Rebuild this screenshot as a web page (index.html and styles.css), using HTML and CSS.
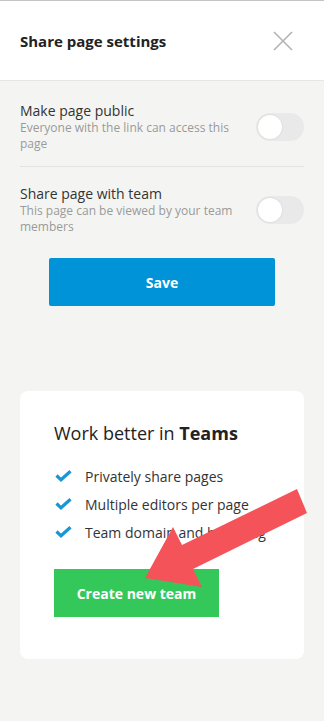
FILE: index.html
```html
<!DOCTYPE html>
<html>
<head>
<meta charset="utf-8">
<link rel="stylesheet" href="styles.css">
</head>
<body>
<div class="page">
  <header class="header">
    <h1 class="title">Share page settings</h1>
    <svg class="close" width="20" height="20" viewBox="0 0 20 20"><path d="M1 1 L19 19 M19 1 L1 19" stroke="#b3b3b3" stroke-width="1.6" fill="none"/></svg>
  </header>
  <section class="settings">
    <div class="row row-first">
      <div class="row-text">
        <div class="row-title">Make page public</div>
        <div class="row-sub">Everyone with the link can access this page</div>
      </div>
      <div class="toggle"><span class="knob"></span></div>
    </div>
    <div class="row row-second">
      <div class="row-text">
        <div class="row-title">Share page with team</div>
        <div class="row-sub">This page can be viewed by your team members</div>
      </div>
      <div class="toggle"><span class="knob"></span></div>
    </div>
    <button class="save">Save</button>
  </section>
  <section class="card">
    <h2 class="card-title">Work better in <b>Teams</b></h2>
    <ul class="features">
      <li><svg class="check" width="17" height="12" viewBox="0 0 17 12"><path d="M1.5 5.5 L6 9.8 L15.5 1.2" stroke="#1a96d6" stroke-width="3.2" fill="none"/></svg>Privately share pages</li>
      <li><svg class="check" width="17" height="12" viewBox="0 0 17 12"><path d="M1.5 5.5 L6 9.8 L15.5 1.2" stroke="#1a96d6" stroke-width="3.2" fill="none"/></svg>Multiple editors per page</li>
      <li><svg class="check" width="17" height="12" viewBox="0 0 17 12"><path d="M1.5 5.5 L6 9.8 L15.5 1.2" stroke="#1a96d6" stroke-width="3.2" fill="none"/></svg>Team domain and branding</li>
    </ul>
    <button class="create">Create new team</button>
  </section>
  <svg class="arrow" width="324" height="721" viewBox="0 0 324 721"><polygon points="297,489 307,513 193,569 202,587 145,578 173,527 182,545" fill="#f4535a"/></svg>
</div>
</body>
</html>
```
FILE: styles.css
```css
* { box-sizing: border-box; }
html, body { margin: 0; padding: 0; }
body {
  background: #f4f5f2;
  font-family: "Open Sans", "Liberation Sans", sans-serif;
  color: #333;
}
.page {
  position: relative;
  width: 324px;
  min-height: 721px;
}
.header {
  height: 81px;
  background: #fff;
  border-top: 1px solid #c4c4c4;
  border-bottom: 1px solid #e6e7e4;
  display: flex;
  align-items: center;
  justify-content: space-between;
  padding: 0 31px 0 20px;
}
.title {
  margin: 0;
  font-size: 15px;
  font-weight: 700;
  color: #222;
  line-height: 20px;
}
.close { display: block; margin-top: 1px; }
.settings {
  padding: 21px 20px 0;
}
.row {
  display: flex;
  align-items: center;
  justify-content: space-between;
}
.row-first {
  padding-bottom: 14px;
  border-bottom: 1px solid #e3e4e1;
}
.row-second {
  padding-top: 18px;
}
.row-text { width: 222px; }
.row-title {
  font-size: 14px;
  line-height: 18px;
  color: #333;
}
.row-sub {
  font-size: 12px;
  line-height: 16px;
  color: #9a9a9a;
}
.toggle {
  width: 48px;
  height: 28px;
  border-radius: 14px;
  background: #e9e9e9;
  padding: 2px;
  flex: none;
}
.knob {
  display: block;
  width: 24px;
  height: 24px;
  border-radius: 50%;
  background: #fff;
  box-shadow: 0 0 2px rgba(0,0,0,0.12);
}
.save {
  display: block;
  width: 226px;
  height: 48px;
  margin: 23px auto 0;
  border: none;
  border-radius: 2px;
  background: #0093d7;
  color: #fff;
  font-family: "Open Sans", "Liberation Sans", sans-serif;
  font-size: 14px;
  font-weight: 700;
}
.card {
  margin: 85px 20px 0;
  background: #fff;
  border-radius: 8px;
  padding: 30px 34px 42px;
}
.card-title {
  margin: 0;
  font-size: 18px;
  font-weight: 400;
  line-height: 24px;
  color: #222;
}
.card-title b { font-weight: 700; }
.features {
  list-style: none;
  margin: 17px 0 0;
  padding: 0;
}
.features li {
  display: flex;
  align-items: center;
  height: 28px;
  font-size: 14px;
  color: #333;
  white-space: nowrap;
}
.check {
  flex: none;
  margin: 0 13px 0 1px;
}
.create {
  display: block;
  width: 165px;
  height: 48px;
  margin-top: 23px;
  border: none;
  background: #34c85a;
  color: #fff;
  font-family: "Open Sans", "Liberation Sans", sans-serif;
  font-size: 14px;
  font-weight: 700;
}
.arrow {
  position: absolute;
  left: 0;
  top: 0;
  pointer-events: none;
}
```
